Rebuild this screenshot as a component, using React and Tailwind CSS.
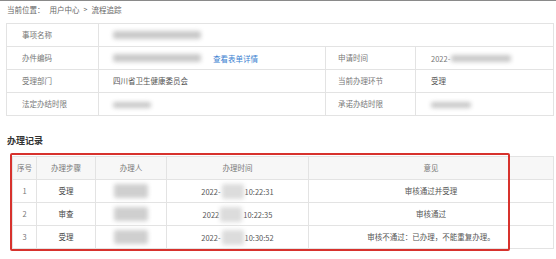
import React from "react";

const Blur = ({ w, h = 9, className = "" }) => (
  <span
    className={"inline-block align-middle bg-[#c9c9c9] rounded-[2px] blur-[2px] " + className}
    style={{ width: w, height: h }}
  />
);

const cell1 = "border border-[#e3e3e3] h-[23px] p-0 align-middle";

export default function App() {
  const records = [
    { n: "1", step: "受理", t: "2022-", tm: "10:22:31", op: "审核通过并受理" },
    { n: "2", step: "审查", t: "2022", tm: "10:22:35", op: "审核通过" },
    { n: "3", step: "受理", t: "2022-", tm: "10:30:52", op: "审核不通过：已办理，不能重复办理。" },
  ];
  return (
    <div
      className="w-[556px] h-[259px] bg-white overflow-hidden text-[7.5px] text-[#777] leading-none"
      style={{ fontFamily: '"Noto Sans CJK SC", "Noto Sans", sans-serif' }}
    >
      <div className="border-t border-[#8a8a8a] h-[18px] flex items-center pl-[7px] text-[#666]">
        <span>当前位置：</span>
        <span className="ml-[5px]">用户中心</span>
        <span className="mx-[4px] text-[7px]">&gt;</span>
        <span>流程追踪</span>
      </div>

      <div className="mt-[5px] ml-[6px]">
        <table className="border-collapse table-fixed w-[547px]">
          <colgroup>
            <col className="w-[92px]" />
            <col className="w-[227px]" />
            <col className="w-[90px]" />
            <col className="w-[138px]" />
          </colgroup>
          <tbody>
            <tr>
              <td className={cell1 + " pl-[15px]"}>事项名称</td>
              <td className={cell1 + " pl-[14px]"} colSpan={3}>
                <Blur w={88} h={8} />
              </td>
            </tr>
            <tr>
              <td className={cell1 + " pl-[15px]"}>办件编码</td>
              <td className={cell1 + " pl-[14px]"}>
                <Blur w={88} h={8} />
                <span className="ml-[12px] text-[#3b7fd1] align-middle">查看表单详情</span>
              </td>
              <td className={cell1 + " pl-[12px]"}>申请时间</td>
              <td className={cell1 + " pl-[15px]"}>
                <span className="align-middle">2022-</span>
                <Blur w={60} h={7} className="ml-[1px]" />
              </td>
            </tr>
            <tr>
              <td className={cell1 + " pl-[15px]"}>受理部门</td>
              <td className={cell1 + " pl-[14px] text-[#555]"}>四川省卫生健康委员会</td>
              <td className={cell1 + " pl-[12px]"}>当前办理环节</td>
              <td className={cell1 + " pl-[15px] text-[#555]"}>受理</td>
            </tr>
            <tr>
              <td className={cell1 + " pl-[15px]"}>法定办结时限</td>
              <td className={cell1 + " pl-[14px]"}>
                <Blur w={38} h={6} />
              </td>
              <td className={cell1 + " pl-[12px]"}>承诺办结时限</td>
              <td className={cell1 + " pl-[15px]"}>
                <Blur w={40} h={6} />
              </td>
            </tr>
          </tbody>
        </table>
      </div>

      <div className="mt-[20px] ml-[7px] text-[9px] font-bold text-[#333]">办理记录</div>

      <div className="relative mt-[11px] ml-[12px]">
        <table className="border-collapse table-fixed w-[541px] text-center">
          <colgroup>
            <col className="w-[24px]" />
            <col className="w-[59px]" />
            <col className="w-[71px]" />
            <col className="w-[142px]" />
            <col className="w-[245px]" />
          </colgroup>
          <thead>
            <tr className="bg-[#f7f7f7]">
              <th className="border border-[#e3e3e3] h-[23px] font-normal">序号</th>
              <th className="border border-[#e3e3e3] font-normal">办理步骤</th>
              <th className="border border-[#e3e3e3] font-normal">办理人</th>
              <th className="border border-[#e3e3e3] font-normal">办理时间</th>
              <th className="border border-[#e3e3e3] font-normal">意见</th>
            </tr>
          </thead>
          <tbody>
            {records.map((r) => (
              <tr key={r.n}>
                <td className="border border-[#e3e3e3] h-[23px]">{r.n}</td>
                <td className="border border-[#e3e3e3] text-[#444]">{r.step}</td>
                <td className="border border-[#e3e3e3]">
                  <Blur w={34} h={14} className="bg-[#cfcfcf]" />
                </td>
                <td className="border border-[#e3e3e3] text-[#555]">
                  <span className="align-middle">{r.t}</span>
                  <Blur w={22} h={15} className="bg-[#dcdcdc] mx-[1px]" />
                  <span className="align-middle">{r.tm}</span>
                </td>
                <td className="border border-[#e3e3e3] text-[#555]">{r.op}</td>
              </tr>
            ))}
          </tbody>
        </table>
        <div className="absolute left-[-2px] top-[-3px] w-[500px] h-[98px] border-2 border-[#d7322d] rounded-[2px] pointer-events-none" />
      </div>
    </div>
  );
}
